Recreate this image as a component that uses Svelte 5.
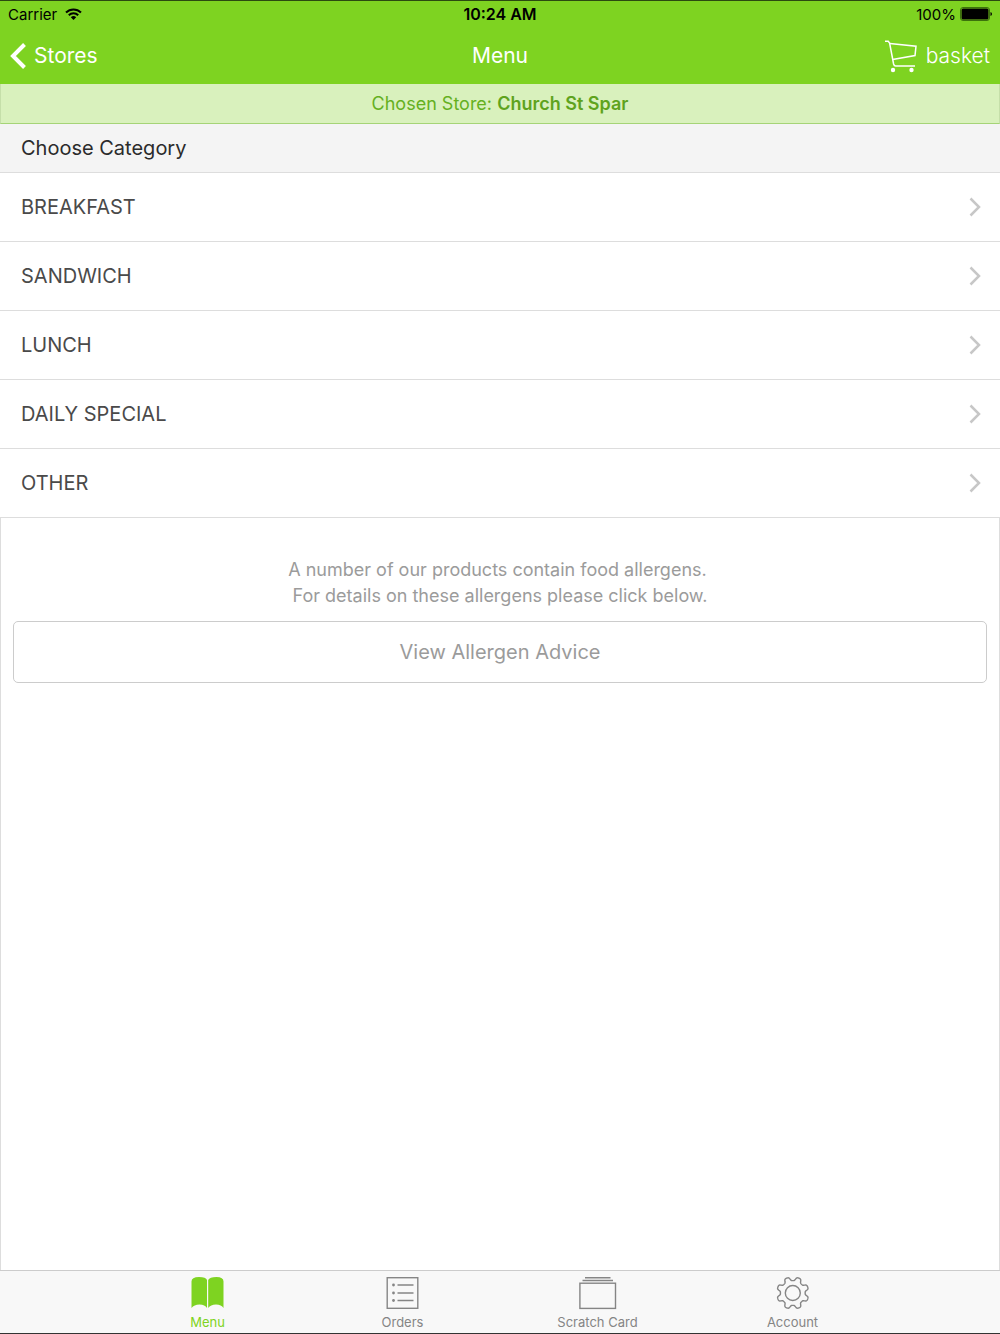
<script lang="ts">
  const categories = ["BREAKFAST", "SANDWICH", "LUNCH", "DAILY SPECIAL", "OTHER"];
  const tabs = ["Menu", "Orders", "Scratch Card", "Account"];

  let active = $state("Menu");

  // eight flattened teeth around a circle, with a notch at the top
  function gearPath(cx: number, cy: number) {
    const points: string[] = [];
    for (let i = 0; i < 192; i++) {
      const a = (i / 192) * Math.PI * 2;
      const wave = Math.tanh(-2 * Math.cos(8 * a));
      const r = 14.2 + 1.9 * wave;
      points.push(`${(cx + r * Math.sin(a)).toFixed(2)} ${(cy - r * Math.cos(a)).toFixed(2)}`);
    }
    return "M" + points.join("L") + "Z";
  }
</script>

<div class="app">
  <header>
    <div class="status">
      <div class="side">
        <span>Carrier</span>
        <svg width="17" height="12" viewBox="0 0 17 12" fill="none" stroke="#000" stroke-width="2">
          <path d="M1 4.5a10.6 10.6 0 0 1 15 0" />
          <path d="M3.8 7.3a6.6 6.6 0 0 1 9.4 0" />
          <path d="M8.5 12L5.8 9.2a3.9 3.9 0 0 1 5.4 0z" fill="#000" stroke="none" />
        </svg>
      </div>
      <strong>10:24 AM</strong>
      <div class="side end">
        <span>100%</span>
        <svg width="32" height="14" viewBox="0 0 32 14">
          <rect x="0.5" y="0.5" width="29" height="13" rx="2.5" fill="none" stroke="#3c720c" />
          <rect x="1.5" y="1.5" width="27" height="11" rx="1.5" />
          <path d="M30.500 5q1.500 .5 1.500 2t-1.500 2z" />
        </svg>
      </div>
    </div>
    <nav class="navbar">
      <a class="side" href="#stores">
        <svg width="16" height="26" viewBox="0 0 16 26" fill="none" stroke="#fff" stroke-width="4">
          <path d="M14.5 1.5L3 13l11.5 11.5" />
        </svg>
        <span>Stores</span>
      </a>
      <h1>Menu</h1>
      <a class="side end" href="#basket">
        <svg width="34" height="34" viewBox="0 0 34 34" fill="none" stroke="#fff" stroke-width="1.5">
          <path d="M1 2.200h3.200L5.600 4l4 21q.5 2 2 2H31" />
          <path d="M5.800 4.500L32 7.200l-1 9.300L8.600 20.500" />
          <circle cx="9" cy="31" r="2.200" fill="#fff" stroke="none" />
          <circle cx="27.500" cy="31" r="2.200" fill="#fff" stroke="none" />
        </svg>
        <span>basket</span>
      </a>
    </nav>
  </header>

  <main>
    <p class="store">Chosen Store: <b>Church St Spar</b></p>
    <h2>Choose Category</h2>
    <ul>
      {#each categories as category}
        <li>
          <a href="#category">
            <span>{category}</span>
            <svg width="12" height="20" viewBox="0 0 12 20" fill="none" stroke="#c7c7c7" stroke-width="2.5">
              <path d="M1.5 1.5L10 10l-8.500 8.500" />
            </svg>
          </a>
        </li>
      {/each}
    </ul>
    <section>
      <p class="advice">A number of our products contain food allergens.&nbsp;<br />For details on these allergens please click below.</p>
      <button class="allergen">View Allergen Advice</button>
    </section>
  </main>

  <footer>
    {#each tabs as tab}
      <button class="tab" class:active={active === tab} onclick={() => {active = tab}}>
        <svg width="38" height="34" viewBox="0 0 38 34" fill="none" stroke="currentColor" stroke-width="1.400">
          {#if tab === "Menu"}
            <g fill="currentColor" stroke="none">
              <path d="M2.500 32V5.500Q2.500 1 10 1q7 0 8 3v28Q16 28.500 10.500 28.500T2.500 32z" />
              <path d="M34.500 32V5.500Q34.500 1 27.500 1q-7 0-8.300 3v28q2.300-3.500 7.800-3.500T34.500 32z" />
            </g>
          {:else if tab === "Orders"}
            <rect x="3.200" y="1.700" width="30.600" height="30.600" />
            <path d="M13.500 9h16M13.500 17h16M13.500 24.500h16" />
            <g fill="currentColor" stroke="none">
              <circle cx="9.500" cy="9" r="1.400" />
              <circle cx="9.500" cy="17" r="1.400" />
              <circle cx="9.500" cy="24.500" r="1.400" />
            </g>
          {:else if tab === "Scratch Card"}
            <rect x="0.900" y="7.200" width="35.600" height="25.200" />
            <path d="M3.500 4.500h30.500M6 1.700h25.500" />
          {:else}
            <path d={gearPath(18.8, 17)} />
            <circle cx="18.800" cy="17" r="7.500" />
          {/if}
        </svg>
        <span>{tab}</span>
      </button>
    {/each}
  </footer>
</div>

<style>
  :global(body) {
    margin: 0;
  }
  .app {
    display: flex;
    flex-direction: column;
    min-height: 100vh;
    box-sizing: border-box;
    border-top: 1px solid #2b4a10;
    border-bottom: 1px solid #333;
    background-color: #fff;
    font-family: Inter, "Liberation Sans", sans-serif;
  }
  header {
    background-color: #7ed321;
  }
  .status {
    display: flex;
    align-items: center;
    height: 26px;
    padding: 0 8px;
    font-size: 15px;
    color: #000;
  }
  .status strong {
    font-size: 16px;
    font-weight: 600;
  }
  .side {
    display: flex;
    flex: 1;
    align-items: center;
    gap: 8px;
  }
  .end {
    justify-content: flex-end;
  }
  .status .end {
    gap: 4px;
  }
  .navbar {
    display: flex;
    align-items: center;
    height: 57px;
    padding: 0 10px;
    font-size: 21px;
    color: #fff;
  }
  .navbar a {
    color: #fff;
    text-decoration: none;
  }
  .navbar .end {
    font-weight: 300;
  }
  h1 {
    margin: 0;
    font-size: 21px;
    font-weight: 400;
  }
  main {
    display: flex;
    flex: 1;
    flex-direction: column;
  }
  .store {
    margin: 0;
    border: 1px solid #a5d477;
    border-top: none;
    border-left-color: #c5dfa9;
    border-right-color: #c5dfa9;
    background-color: #d9f1bd;
    color: #65b01f;
    font-size: 18px;
    line-height: 39px;
    text-align: center;
  }
  .store b {
    font-weight: 600;
    color: #5fa31d;
  }
  h2 {
    margin: 0;
    padding: 0 21px;
    border-bottom: 1px solid #ddd;
    background-color: #f4f4f4;
    color: #2b2b2b;
    font-size: 20px;
    font-weight: 400;
    line-height: 48px;
  }
  ul {
    margin: 0;
    padding: 0;
    list-style: none;
  }
  li a {
    display: flex;
    align-items: center;
    justify-content: space-between;
    padding: 0 19px 0 21px;
    border-bottom: 1px solid #ddd;
    color: #4a4a4a;
    font-size: 20px;
    line-height: 68px;
    text-decoration: none;
  }
  section {
    display: flex;
    flex: 1;
    flex-direction: column;
    border: 1px solid #ddd;
    border-top: none;
    border-bottom: none;
  }
  .advice {
    margin: 39px 0 12px;
    color: #9b9b9b;
    font-size: 18px;
    line-height: 26px;
    text-align: center;
  }
  .allergen {
    height: 62px;
    margin: 0 12px;
    border: 1px solid #ccc;
    border-radius: 5px;
    background-color: #fff;
    color: #9b9b9b;
    font-family: inherit;
    font-size: 20px;
  }
  footer {
    display: flex;
    justify-content: center;
    border-top: 1px solid #ccc;
    background-color: #f8f8f8;
  }
  .tab {
    display: flex;
    flex: 0 1 195px;
    flex-direction: column;
    align-items: center;
    gap: 3px;
    height: 62px;
    padding: 5px 0 0;
    border: none;
    background: none;
    color: #858585;
    font-family: inherit;
    font-size: 13px;
    line-height: 18px;
  }
  .active {
    color: #7ed321;
  }
</style>
